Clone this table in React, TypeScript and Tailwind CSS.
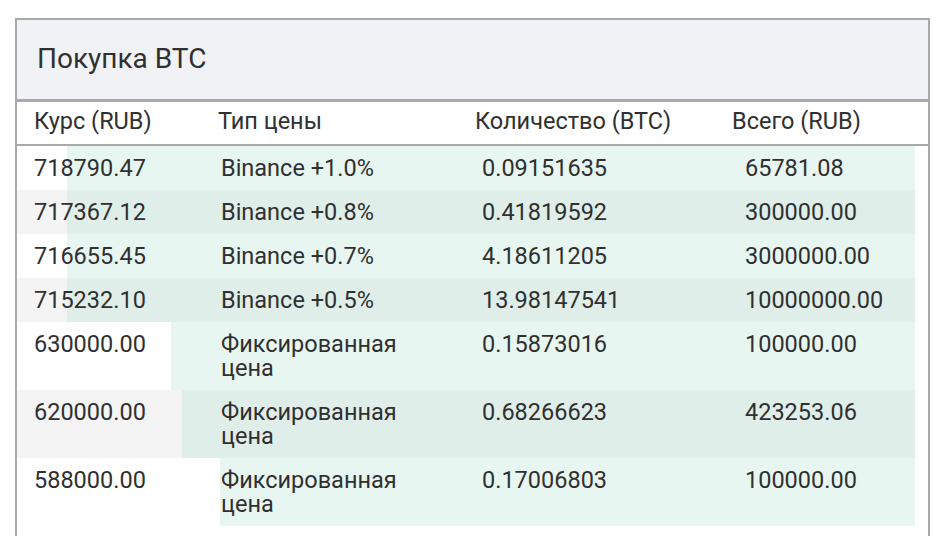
const rows = [
  { price: "718790.47", type: "Binance +1.0%", amount: "0.09151635", total: "65781.08", bar: "left-[50px]" },
  { price: "717367.12", type: "Binance +0.8%", amount: "0.41819592", total: "300000.00", bar: "left-[50px]" },
  { price: "716655.45", type: "Binance +0.7%", amount: "4.18611205", total: "3000000.00", bar: "left-[50px]" },
  { price: "715232.10", type: "Binance +0.5%", amount: "13.98147541", total: "10000000.00", bar: "left-[50px]" },
  { price: "630000.00", type: "Фиксированная цена", amount: "0.15873016", total: "100000.00", bar: "left-[154px]" },
  { price: "620000.00", type: "Фиксированная цена", amount: "0.68266623", total: "423253.06", bar: "left-[165px]" },
  { price: "588000.00", type: "Фиксированная цена", amount: "0.17006803", total: "100000.00", bar: "left-[203px]" },
];

export default function App() {
  return (
    <div className="w-[951px] h-[536px] bg-white overflow-hidden pt-[18px] pl-[15px] font-['Roboto',sans-serif] text-[#303030]">
      <div className="w-[915px] h-[600px] border-2 border-[#a9a9a9] border-b-0">
        <div className="h-[82px] bg-[#f0f2f5] border-b-[3px] border-[#a9a9a9] flex items-center pl-[20px] pb-[1px]">
          <h1 className="text-[28px] leading-none">Покупка BTC</h1>
        </div>
        <div className="h-[44px] grid grid-cols-[184px_257px_257px_1fr] items-center pl-[17px] border-b-2 border-[#a9a9a9] text-[23.5px] leading-none pb-[2px]">
          <div>Курс (RUB)</div>
          <div>Тип цены</div>
          <div>Количество (BTC)</div>
          <div>Всего (RUB)</div>
        </div>
        <div className="w-[898px]">
          {rows.map((r, i) => (
            <div key={r.price} className={`relative ${i % 2 === 1 ? "bg-[#f4f4f4]" : "bg-white"}`}>
              <div className={`absolute top-0 bottom-0 right-0 ${r.bar} ${i % 2 === 1 ? "bg-[#e0eee9]" : "bg-[#e8f6f1]"}`} />
              <div className="relative grid grid-cols-[187px_261px_263px_1fr] pl-[17px] pt-[10px] pb-[10px] text-[23.5px] leading-[24px]">
                <div>{r.price}</div>
                <div className="pr-[40px]">{r.type}</div>
                <div>{r.amount}</div>
                <div>{r.total}</div>
              </div>
            </div>
          ))}
        </div>
      </div>
    </div>
  );
}
